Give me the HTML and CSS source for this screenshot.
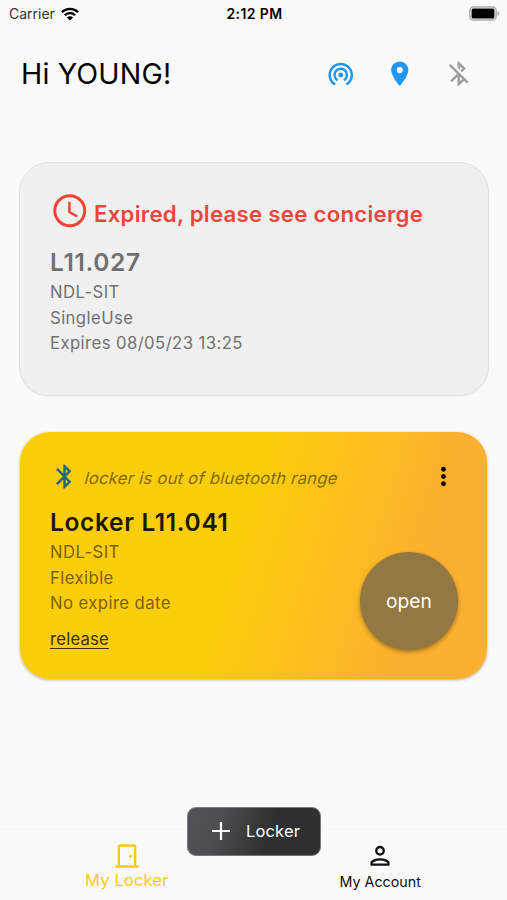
FILE: index.html
```html
<!DOCTYPE html>
<html lang="en">
<head>
<meta charset="utf-8">
<title>My Locker</title>
<link rel="stylesheet" href="styles.css">
</head>
<body>
<div class="screen">
  <div class="status">
    <div class="status-left"><span class="carrier">Carrier</span>
      <svg class="wifi" viewBox="0 0 18 14"><g fill="none" stroke="#000" stroke-width="2.3"><path d="M.9 5.2a11.6 11.6 0 0 1 16.2 0"/><path d="M3.8 8.3a7.4 7.4 0 0 1 10.4 0"/></g><path d="M9 13.6 5.9 10.5a4.4 4.4 0 0 1 6.2 0z"/></svg>
    </div>
    <span class="time">2:12 PM</span>
    <svg class="battery" viewBox="0 0 31 15"><rect x=".9" y=".9" width="26.2" height="13.2" rx="3.6" fill="#fafafa" stroke="#aaa" stroke-width="1.5"/><rect x="2.6" y="2.6" width="22.8" height="9.8" rx="1.5"/><path d="M28.6 5v5c2.4-1 2.4-4 0-5z" fill="#aaa"/></svg>
  </div>
  <header class="header">
    <h1>Hi YOUNG!</h1>
    <div class="signals">
      <svg viewBox="0 0 24 24" fill="#2196f3"><path d="M12 11c-1.1 0-2 .9-2 2s.9 2 2 2 2-.9 2-2-.9-2-2-2zm6 2c0-3.31-2.69-6-6-6s-6 2.69-6 6c0 2.22 1.21 4.15 3 5.19l1-1.74c-1.19-.7-2-1.97-2-3.45 0-2.21 1.79-4 4-4s4 1.79 4 4c0 1.48-.81 2.75-2 3.45l1 1.74c1.79-1.04 3-2.97 3-5.19zM12 3C6.48 3 2 7.48 2 13c0 3.7 2.01 6.92 4.99 8.65l1-1.73C5.61 18.53 4 15.96 4 13c0-4.42 3.58-8 8-8s8 3.58 8 8c0 2.96-1.61 5.53-4 6.92l1 1.73c2.99-1.73 5-4.95 5-8.65 0-5.52-4.48-10-10-10z"/></svg>
      <svg viewBox="0 0 24 24" fill="#2196f3"><path d="M12 2C8.13 2 5 5.13 5 9c0 5.25 7 13 7 13s7-7.75 7-13c0-3.87-3.13-7-7-7zm0 9.5a2.5 2.5 0 1 1 0-5 2.5 2.5 0 0 1 0 5z"/></svg>
      <svg viewBox="0 0 24 24" fill="#9e9e9e"><path d="M13 5.83l1.88 1.88-1.6 1.6 1.41 1.41 3.02-3.02L12 2h-1v5.03l2 2v-3.2zM5.41 4L4 5.41 10.59 12 5 17.59 6.41 19 11 14.41V22h1l4.29-4.29 2.3 2.29L20 18.59 5.41 4zM13 18.17v-3.76l1.88 1.88L13 18.17z"/></svg>
    </div>
  </header>
  <main class="cards">
    <section class="card expired">
      <div class="alert">
        <svg viewBox="0 0 24 24" fill="none" stroke="#f44336"><circle cx="12" cy="12" r="9.1" stroke-width="1.8"/><path d="M11.8 6.500v6.300l4.700 2.700" stroke-width="1.5"/></svg>
        <span>Expired, please see concierge</span>
      </div>
      <h2>L11.027</h2>
      <p class="site">NDL-SIT</p>
      <p class="kind">SingleUse</p>
      <p class="expiry">Expires 08/05/23 13:25</p>
    </section>
    <section class="card active">
      <div class="range">
        <svg class="bt" viewBox="0 0 24 24" fill="#1b6b78"><path d="M17.71 7.71L12 2h-1v7.59L6.41 5 5 6.41 10.59 12 5 17.59 6.41 19 11 14.41V22h1l5.71-5.71-4.3-4.29 4.3-4.29zM13 5.83l1.88 1.88L13 9.59V5.83zm1.88 10.46L13 18.17v-3.76l1.88 1.88z"/></svg>
        <span class="hint">locker is out of bluetooth range</span>
        <svg class="more" viewBox="0 0 24 24"><circle cx="12" cy="6" r="2"/><circle cx="12" cy="12" r="2"/><circle cx="12" cy="18" r="2"/></svg>
      </div>
      <div class="body">
        <div class="info">
          <h2>Locker L11.041</h2>
          <p class="site">NDL-SIT</p>
          <p class="flex">Flexible</p>
          <p class="none">No expire date</p>
          <a class="release">release</a>
        </div>
        <button class="open">open</button>
      </div>
    </section>
  </main>
  <nav class="tabs">
    <div class="tab current">
      <svg viewBox="0 0 24 24" fill="none" stroke="#fcca15" stroke-width="2"><path d="M5 21V4.800C5 3.600 5.700 3 6.800 3h10.400c1.100 0 1.800.6 1.800 1.800V21M2 21h20"/><circle cx="15" cy="12.300" r="1.300" fill="#fcca15" stroke="none"/></svg>
      <span>My Locker</span>
    </div>
    <div class="tab">
      <svg viewBox="0 0 24 24" fill="none" stroke="#111" stroke-width="2"><circle cx="12" cy="7.500" r="3.200"/><path d="M4.800 19.400v-1.400c0-2 4.200-3.100 7.200-3.100s7.200 1.100 7.200 3.100v1.400z"/></svg>
      <span>My Account</span>
    </div>
    <button class="add"><svg viewBox="0 0 18 18" stroke="#fff" stroke-width="2.2"><path d="M9 0v18M0 9h18"/></svg><span>Locker</span></button>
  </nav>
</div>
</body>
</html>
```

FILE: styles.css
```css
* { box-sizing: border-box; }
body { margin: 0; background: #fafafa; font-family: Inter, "Liberation Sans", sans-serif; color: #111; }
h1, h2, p { margin: 0; }
svg { display: block; flex: none; }
button { border: 0; font-family: inherit; }
.screen { height: 900px; display: flex; flex-direction: column; overflow: hidden; }
.status { height: 27px; padding: 0 7px 0 9px; display: grid; grid-template-columns: 1fr auto 1fr; align-items: center; font-size: 14px; white-space: nowrap; }
.status-left { display: flex; align-items: center; gap: 6px; color: #333; }
.wifi { width: 18px; height: 14px; }
.time { font-weight: 600; color: #000; letter-spacing: .4px; }
.battery { width: 31px; height: 15px; justify-self: end; }
.header { height: 93px; padding: 0 34px 0 21px; display: flex; align-items: center; justify-content: space-between; }
h1 { font-size: 28.600px; font-weight: 400; letter-spacing: .15px; white-space: nowrap; color: #000; }
.signals { display: flex; gap: 29.200px; padding-top: 1px; }
.signals svg { width: 29.500px; height: 29.500px; }
.cards { margin: 42px 18.500px 0; display: flex; flex-direction: column; gap: 36px; }
.card { border-radius: 30px; white-space: nowrap; }
.expired { height: 234px; padding: 28px 30px 0 30.500px; background: #f0f0f0; border: 1.500px solid #e2e2e2; box-shadow: 0 1px 2px rgba(0,0,0,.06); color: #707070; }
.alert { display: flex; align-items: center; height: 40px; gap: 4.500px; color: #eb463b; font-size: 22.200px; font-weight: 600; letter-spacing: .28px; }
.alert svg { width: 39.500px; height: 39.500px; }
.alert span { padding-top: 4px; }
h2 { font-size: 24.500px; line-height: 30px; font-weight: 600; letter-spacing: .65px; }
.expired h2 { margin: 16px 0 3px; }
.card p { font-size: 16.700px; line-height: 25.700px; letter-spacing: .42px; }
.expired p { color: #707070; }
.active { height: 247px; margin: 0 1.500px; padding: 29px 29px 0 30px; background: linear-gradient(107deg, #fccd0b 47%, #fbb02f 82%); box-shadow: 0 1px 3px rgba(0,0,0,.3); }
.range { display: flex; align-items: center; height: 30px; }
.bt { width: 29px; height: 29px; }
.hint { font-size: 16.600px; color: #826a10; margin: 4px auto 0 6px; letter-spacing: .26px; transform: skewX(-15deg); }
.more { width: 29px; height: 29px; }
.body { display: flex; justify-content: space-between; }
.info { padding-top: 16px; }
.active h2 { color: #1d1805; margin-bottom: 3px; }
.active p { color: #78630a; }
.release { display: inline-block; margin-top: 10px; font-size: 16.700px; line-height: 24px; letter-spacing: .2px; color: #3b3108; text-decoration: underline; text-decoration-thickness: 1.200px; text-underline-offset: 3px; }
.open { width: 98px; height: 98px; margin: 61px 0 0; border-radius: 50%; background: #927842; color: #fff; font-size: 19.200px; box-shadow: 0 2px 4px rgba(0,0,0,.35); padding: 0; }
.tabs { position: relative; margin-top: auto; height: 71px; border-top: 1px solid #f6f6f6; display: grid; grid-template-columns: 1fr 1fr; }
.tab { display: flex; flex-direction: column; align-items: center; padding-top: 12px; white-space: nowrap; font-size: 14.300px; }
.tab svg { width: 28px; height: 28px; }
.tab span { line-height: 24px; }
.current { color: #fcca15; font-size: 16.500px; letter-spacing: .15px; }
.current span { line-height: 21px; }
.add { position: absolute; left: 187px; top: -23px; width: 134px; height: 49px; border-radius: 9px; border: 1px solid #777; background: linear-gradient(110deg, #555559 0%, #4d4d50 25%, #303030 60%); color: #fff; display: flex; align-items: center; gap: 16px; padding: 0 0 1px 24px; font-size: 16.500px; letter-spacing: .15px; }
.add svg { width: 18px; height: 18px; }
```
